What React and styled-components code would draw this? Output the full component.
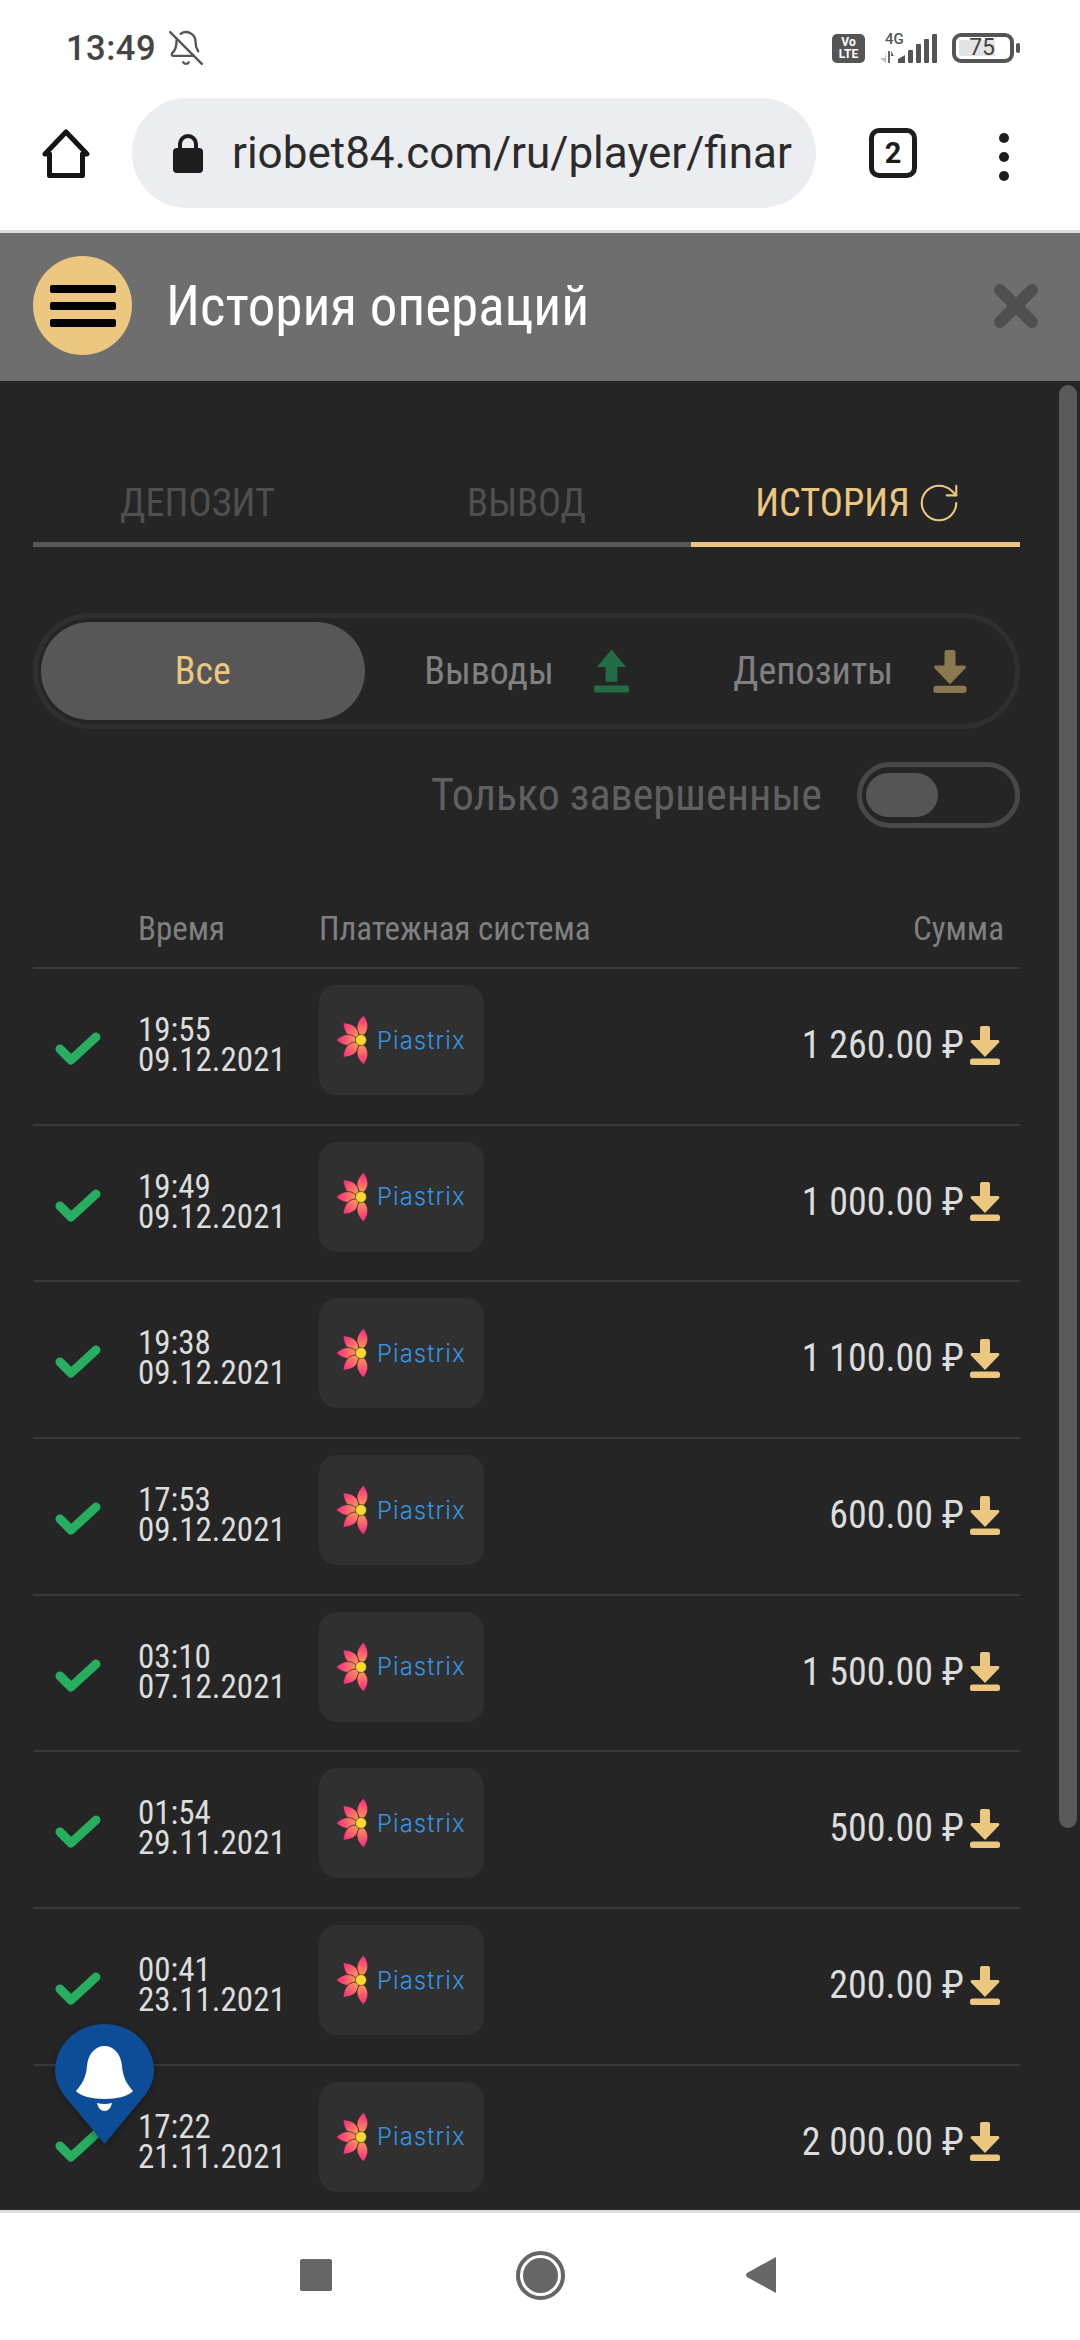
import React from 'react';
import styled, { createGlobalStyle } from 'styled-components';
import { BellOff, RotateCw } from 'lucide-react';

const GlobalStyle = createGlobalStyle`
  html, body { margin: 0; padding: 0; background: #fff; }
  * { box-sizing: border-box; }
  body { font-family: "Roboto Condensed", Roboto, sans-serif; font-stretch: 75%; }
`;

const gold = '#ebc77f';

const Screen = styled.div`
  width: 1080px;
  height: 2340px;
  display: flex;
  flex-direction: column;
  overflow: hidden;
  background: #fff;
`;

const StatusBar = styled.div`
  height: 96px;
  padding: 0 60px 0 66px;
  display: flex;
  align-items: center;
  justify-content: space-between;
  color: #555;
  flex-shrink: 0;
`;

const StatusLeft = styled.div`
  display: flex;
  align-items: center;
  gap: 11px;
`;

const Clock = styled.span`
  font-family: Roboto, sans-serif;
  font-stretch: 100%;
  font-size: 34.5px;
  font-weight: 500;
  letter-spacing: 0.5px;
  color: #444;
`;

const StatusRight = styled.div`
  display: flex;
  align-items: center;
  gap: 15px;
`;

const VolteBadge = styled.div`
  width: 33px;
  height: 29px;
  border-radius: 5px;
  background: #555;
  color: #fff;
  font: 700 12px/12.5px Roboto, sans-serif;
  text-align: center;
  padding-top: 2px;
`;

const Signal = styled.div`
  position: relative;
  width: 57px;
  height: 31px;
`;

const SignalLabel = styled.span`
  position: absolute;
  left: 5px;
  top: -1px;
  font: 500 15px/15px Roboto, sans-serif;
  color: #555;
`;

const Battery = styled.div`
  width: 62px;
  height: 30px;
  border: 4px solid #555;
  border-radius: 9px;
  padding: 3px;
  position: relative;
  margin-right: 6px;
  &::after {
    content: '';
    position: absolute;
    right: -10px;
    top: 6px;
    width: 4px;
    height: 10px;
    border-radius: 2px;
    background: #555;
  }
`;

const BatteryFill = styled.div`
  width: 36px;
  height: 100%;
  background: #e4e4e4;
  color: #444;
  font: 400 23px/16px Roboto, sans-serif;
  white-space: nowrap;
  text-align: right;
`;

const Toolbar = styled.div`
  height: 137px;
  flex-shrink: 0;
  border-bottom: 3px solid #dcdedc;
  padding: 2px 0 0 40px;
  display: flex;
  align-items: flex-start;
`;

const HomeButton = styled.div`
  width: 56px;
  height: 56px;
  margin-top: 28px;
`;

const AddressBar = styled.div`
  width: 684px;
  height: 110px;
  margin-left: 36px;
  border-radius: 55px;
  background: #ebedf0;
  display: flex;
  align-items: center;
  padding: 0 24px 0 40px;
  overflow: hidden;
`;

const UrlText = styled.span`
  font-family: Roboto, sans-serif;
  font-stretch: 100%;
  font-size: 44px;
  color: #2b2b2b;
  margin-left: 28px;
  white-space: nowrap;
`;

const TabCount = styled.div`
  width: 48px;
  height: 50px;
  margin: 30px 0 0 53px;
  border: 5px solid #1d1d1d;
  border-radius: 10px;
  font: 700 29px/40px Roboto, sans-serif;
  text-align: center;
  color: #1d1d1d;
`;

const MenuDots = styled.div`
  margin: 35px 0 0 82px;
  display: flex;
  flex-direction: column;
  gap: 9px;
  span {
    width: 10px;
    height: 10px;
    border-radius: 50%;
    background: #1d1d1d;
  }
`;

const Header = styled.div`
  height: 148px;
  flex-shrink: 0;
  background: #6e6e6e;
  display: flex;
  align-items: center;
  padding: 0 40px 3px 33px;
`;

const Burger = styled.div`
  width: 99px;
  height: 99px;
  border-radius: 50%;
  background: ${gold};
  display: flex;
  flex-direction: column;
  align-items: center;
  justify-content: center;
  gap: 9px;
  span {
    width: 66px;
    height: 8px;
    border-radius: 2px;
    background: #000;
  }
`;

const Title = styled.div`
  margin-left: 34px;
  flex: 1;
  color: #fff;
  font-size: 55px;
`;

const Panel = styled.div`
  flex: 1;
  position: relative;
  overflow: hidden;
  background: #252525;
  padding: 100px 60px 0 33px;
`;

const ScrollThumb = styled.div`
  position: absolute;
  right: 3px;
  top: 4px;
  width: 18px;
  height: 1443px;
  background: #595959;
  border-radius: 9px;
`;

const Tabs = styled.div`
  display: grid;
  grid-template-columns: repeat(3, 1fr);
`;

const Tab = styled.div`
  height: 66px;
  padding: 0 0 18px ${p => (p.$active ? '6px' : 0)};
  display: flex;
  align-items: center;
  justify-content: center;
  gap: 6px;
  border-bottom: 5px solid ${p => (p.$active ? gold : '#585858')};
  color: ${p => (p.$active ? gold : '#4f4f4f')};
  font-size: 38.5px;
`;

const Filter = styled.div`
  margin-top: 66px;
  height: 116px;
  border: 5px solid #2f2f2f;
  border-radius: 58px;
  padding: 4px 3px;
  display: grid;
  grid-template-columns: repeat(3, 1fr);
`;

const FilterItem = styled.div`
  border-radius: 50px;
  display: flex;
  align-items: center;
  justify-content: center;
  gap: 40px;
  font-size: 38px;
  background: ${p => (p.$active ? '#575757' : 'transparent')};
  color: ${p => (p.$active ? gold : '#808080')};
`;

const ToggleRow = styled.div`
  margin-top: 33px;
  display: flex;
  align-items: center;
  justify-content: flex-end;
  gap: 35px;
`;

const ToggleLabel = styled.span`
  color: #606060;
  font-size: 44px;
`;

const Toggle = styled.div`
  width: 163px;
  height: 66px;
  border: 5px solid #484848;
  border-radius: 33px;
  padding: 6px 4px;
  &::before {
    content: '';
    display: block;
    width: 72px;
    height: 44px;
    border-radius: 22px;
    background: #555;
  }
`;

const TableHead = styled.div`
  margin-top: 70px;
  height: 71px;
  padding-bottom: 9px;
  display: grid;
  grid-template-columns: 105px 181px 1fr auto;
  align-items: center;
  color: #808080;
  font-size: 33px;
  border-bottom: 2px solid #3a3a3a;
`;

const HeadCell = styled.div`
  grid-column: ${p => p.$col};
  padding-right: ${p => (p.$end ? '16px' : 0)};
`;

const Row = styled.div`
  height: 156.7px;
  padding-top: 16px;
  display: grid;
  grid-template-columns: 105px 181px 165px 1fr;
  align-items: start;
  border-bottom: 2px solid #3a3a3a;
`;

const CheckCell = styled.div`
  padding: 47px 0 0 22px;
`;

const TimeCell = styled.div`
  padding-top: 30px;
  color: #dcdcdc;
  font-size: 33px;
  line-height: 30px;
`;

const LogoCard = styled.div`
  height: 110px;
  border-radius: 18px;
  background: #303030;
  display: flex;
  align-items: center;
  padding: 0 0 0 18px;
  gap: 8px;
`;

const LogoText = styled.span`
  font-family: Inter, sans-serif;
  font-stretch: 100%;
  font-weight: 300;
  font-size: 24px;
  letter-spacing: 1px;
  color: #3494e2;
`;

const AmountCell = styled.div`
  padding: 40px 20px 0 0;
  display: flex;
  align-items: center;
  justify-content: flex-end;
  gap: 6px;
  color: #dcdcdc;
  font-size: 38px;
  line-height: 40px;
`;

const NotifyPin = styled.div`
  position: absolute;
  left: 55px;
  top: 1643px;
  width: 99px;
  height: 120px;
  filter: drop-shadow(0 2px 4px rgba(0, 0, 0, 0.35));
`;

const NavBar = styled.div`
  flex-shrink: 0;
  height: 130px;
  border-top: 3px solid #dcdedc;
  background: #fff;
  display: flex;
  align-items: center;
  padding: 0 0 3px 300px;
`;

const NavSquare = styled.div`
  width: 32px;
  height: 32px;
  background: #666;
  border-radius: 2px;
`;

const NavCircle = styled.div`
  width: 49px;
  height: 49px;
  margin: 0 180px 0 184px;
  border-radius: 50%;
  border: 4px solid #666;
  padding: 3px;
  &::before {
    content: '';
    display: block;
    width: 100%;
    height: 100%;
    border-radius: 50%;
    background: #666;
  }
`;

const HomeIcon = () => (
  <svg width="56" height="56" viewBox="0 0 56 56" fill="none">
    <path d="M26 6 L47 28 H42.5 V49.5 H9.5 V28 H5 Z" stroke="#141414" strokeWidth="5" strokeLinejoin="round" />
  </svg>
);

const LockIcon = () => (
  <svg width="32" height="40" viewBox="0 0 32 40">
    <path d="M8 16 V11 a8 8 0 0 1 16 0 V16" fill="none" stroke="#1d1d1d" strokeWidth="4" />
    <rect x="1" y="15" width="30" height="25" rx="4" fill="#1d1d1d" />
  </svg>
);

const SignalBars = () => (
  <svg width="57" height="31" viewBox="0 0 57 31">
    <path d="M6 18 V30 L0 25 H5 Z" fill="#bbb" />
    <path d="M8 30 V18 H10 V30 Z M11 18 L14 23 H11 Z" fill="#666" />
    <path d="M18 30 V26 L25 22 V30 Z" fill="#555" />
    <rect x="28" y="17" width="5" height="13" rx="1" fill="#555" />
    <rect x="36" y="11" width="5" height="19" rx="1" fill="#555" />
    <rect x="44" y="6" width="5" height="24" rx="1" fill="#555" />
    <rect x="52" y="1" width="5" height="29" rx="1" fill="#555" />
  </svg>
);

const CloseIcon = () => (
  <svg width="48" height="48" viewBox="0 0 48 48">
    <path d="M8 8 L40 40 M40 8 L8 40" stroke="#4f4f4f" strokeWidth="12" strokeLinecap="round" />
  </svg>
);

const UpArrow = ({ color }) => (
  <svg width="35" height="44" viewBox="0 0 36 44" fill={color}>
    <path d="M18 0 L33 18 H24 V33 H12 V18 H3 Z" />
    <rect x="0" y="37" width="36" height="7" rx="2" />
  </svg>
);

const DownArrow = ({ color, width = 34, height = 43 }) => (
  <svg width={width} height={height} viewBox="0 0 30 39" fill={color}>
    <path d="M10 2 a2 2 0 0 1 2 -2 h6 a2 2 0 0 1 2 2 V14 h8 a1.5 1.5 0 0 1 1 2.5 L15 31 L1 16.5 a1.5 1.5 0 0 1 1 -2.5 h8 Z" />
    <rect x="0" y="32.5" width="30" height="6.5" rx="2.5" />
  </svg>
);

const CheckIcon = () => (
  <svg width="46" height="34" viewBox="0 0 46 34">
    <path d="M5 17 L16 28 L41 5" fill="none" stroke="#27ae60" strokeWidth="9" strokeLinecap="round" strokeLinejoin="round" />
  </svg>
);

const petals = [6, -46, -90, -134, 174];

const FlowerLogo = () => (
  <svg width="32" height="50" viewBox="0 0 32 50">
    <defs>
      <linearGradient id="petal" x1="0" y1="0" x2="0" y2="-25" gradientUnits="userSpaceOnUse">
        <stop offset="0.15" stopColor="#ff9a55" />
        <stop offset="0.9" stopColor="#f8327f" />
      </linearGradient>
    </defs>
    {petals.map(a => (
      <path
        key={a}
        transform={`translate(24 25) rotate(${a})`}
        d="M0 -3 C-7.5 -9 -7 -17 0 -25 C7 -17 7.5 -9 0 -3 Z"
        fill="url(#petal)"
        stroke="#303030"
        strokeWidth="0.8"
      />
    ))}
    <circle cx="24" cy="25" r="5.5" fill="#fbd92f" stroke="#303030" strokeWidth="0.6" />
  </svg>
);

const BellPin = () => (
  <svg width="99" height="120" viewBox="0 0 99 120">
    <path d="M49.5 120 L8 70 Q0 58 0 47 A49.5 47 0 0 1 99 47 Q99 58 91 70 Z" fill="#0d4d97" />
    <path d="M49.5 22 C58 22 66 29 67 42 C68 54 72 60 78 67 C74 72 62 75 49.5 75 C37 75 25 72 21 67 C27 60 31 54 32 42 C33 29 41 22 49.5 22 Z" fill="#fff" />
    <path d="M42 79 Q49.5 81 57 79 C56 84 53 87 49.5 87 C46 87 43 84 42 79 Z" fill="#fff" />
  </svg>
);

const BackTriangle = () => (
  <svg width="32" height="38" viewBox="0 0 32 38">
    <path d="M31 1 V37 L2 21 Q0 19 2 17 Z" fill="#666" />
  </svg>
);

const rows = [
  ['19:55', '09.12.2021', '1 260.00'],
  ['19:49', '09.12.2021', '1 000.00'],
  ['19:38', '09.12.2021', '1 100.00'],
  ['17:53', '09.12.2021', '600.00'],
  ['03:10', '07.12.2021', '1 500.00'],
  ['01:54', '29.11.2021', '500.00'],
  ['00:41', '23.11.2021', '200.00'],
  ['17:22', '21.11.2021', '2 000.00'],
];

export default function App() {
  return (
    <Screen>
      <GlobalStyle />
      <StatusBar>
        <StatusLeft>
          <Clock>13:49</Clock>
          <BellOff size={38} strokeWidth={1.5} color="#555" />
        </StatusLeft>
        <StatusRight>
          <VolteBadge>Vo<br />LTE</VolteBadge>
          <Signal>
            <SignalLabel>4G</SignalLabel>
            <SignalBars />
          </Signal>
          <Battery>
            <BatteryFill>75</BatteryFill>
          </Battery>
        </StatusRight>
      </StatusBar>
      <Toolbar>
        <HomeButton><HomeIcon /></HomeButton>
        <AddressBar>
          <LockIcon />
          <UrlText>riobet84.com/ru/player/finar</UrlText>
        </AddressBar>
        <TabCount>2</TabCount>
        <MenuDots><span /><span /><span /></MenuDots>
      </Toolbar>
      <Header>
        <Burger><span /><span /><span /></Burger>
        <Title>История операций</Title>
        <CloseIcon />
      </Header>
      <Panel>
        <ScrollThumb />
        <Tabs>
          <Tab>ДЕПОЗИТ</Tab>
          <Tab>ВЫВОД</Tab>
          <Tab $active>ИСТОРИЯ <RotateCw size={46} strokeWidth={1.1} color={gold} /></Tab>
        </Tabs>
        <Filter>
          <FilterItem $active>Все</FilterItem>
          <FilterItem>Выводы <UpArrow color="#226c46" /></FilterItem>
          <FilterItem>Депозиты <DownArrow color="#8a7850" /></FilterItem>
        </Filter>
        <ToggleRow>
          <ToggleLabel>Только завершенные</ToggleLabel>
          <Toggle />
        </ToggleRow>
        <TableHead>
          <HeadCell $col={2}>Время</HeadCell>
          <HeadCell $col={3}>Платежная система</HeadCell>
          <HeadCell $col={4} $end>Сумма</HeadCell>
        </TableHead>
        {rows.map(([time, date, sum]) => (
          <Row key={time}>
            <CheckCell><CheckIcon /></CheckCell>
            <TimeCell>{time}<br />{date}</TimeCell>
            <LogoCard>
              <FlowerLogo />
              <LogoText>Piastrix</LogoText>
            </LogoCard>
            <AmountCell>
              {sum} ₽
              <DownArrow color={gold} width={30} height={39} />
            </AmountCell>
          </Row>
        ))}
        <NotifyPin><BellPin /></NotifyPin>
      </Panel>
      <NavBar>
        <NavSquare />
        <NavCircle />
        <BackTriangle />
      </NavBar>
    </Screen>
  );
}
